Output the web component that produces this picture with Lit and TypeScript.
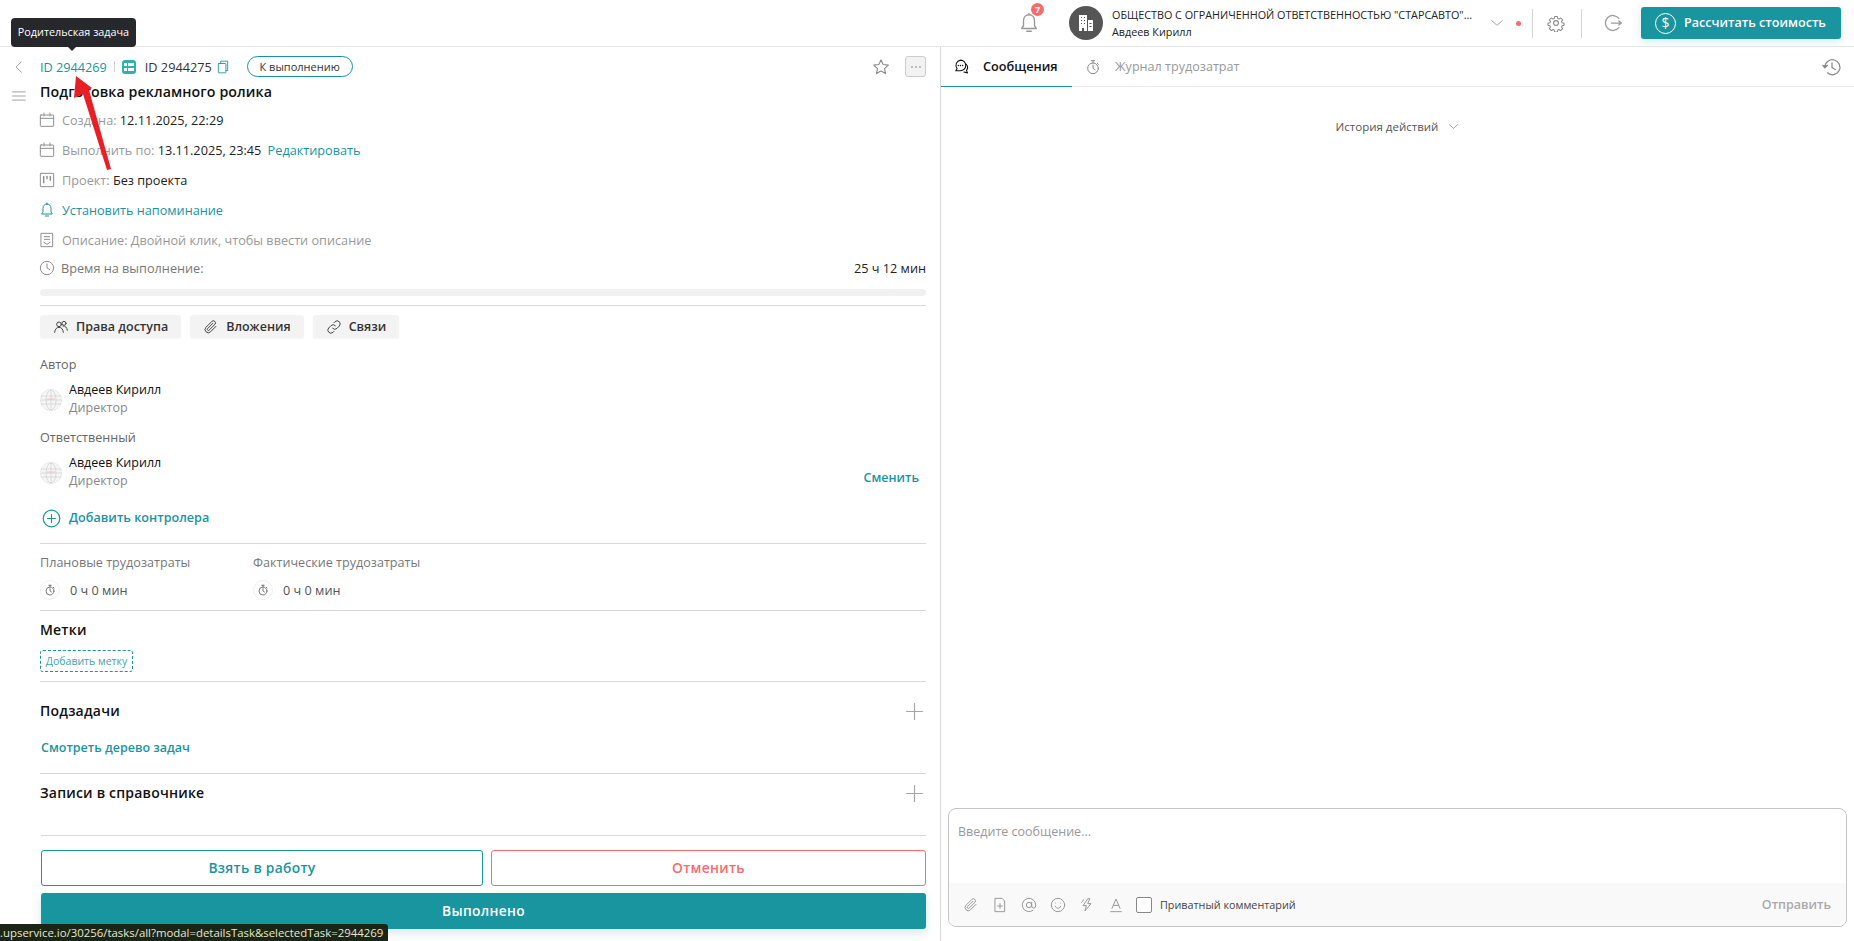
import { LitElement, html, css, svg } from "lit";
import { customElement } from "lit/decorators.js";

const ic = (size: number, body: unknown, cls = "") => html`<svg class="ic ${cls}" width=${size} height=${size} viewBox="0 0 24 24" fill="none" stroke="currentColor" stroke-width="1.5" stroke-linecap="round" stroke-linejoin="round">${body}</svg>`;

const calendar = svg`<rect x="2" y="4.500" width="20" height="17" rx="1"/><path d="M2 9.500h20M7.500 1.500V6M16.500 1.500V6"/>`;
const board = svg`<rect x="2" y="2" width="20" height="20" rx="1"/><path d="M7 6v11M12 6v5M17 6v7" stroke-width="2.200" stroke-linecap="butt"/>`;
const bell = svg`<path d="M12 3c-3.600 0-6 2.700-6 6.500V15l-2 3h16l-2-3V9.500C18 5.700 15.600 3 12 3z"/><path d="M9.500 21h5M12 1.500V3"/>`;
const doc = svg`<path d="M3.500 2h17v20h-17z"/><path d="M8 7h8M8 11h8M7.500 15.500l4.500 3 4.500-3"/>`;
const clock = svg`<circle cx="12" cy="12" r="10"/><path d="M12 6v6l4 2.500"/>`;
const people = svg`<circle cx="9" cy="8" r="3.500"/><circle cx="16.500" cy="6.500" r="3"/><path d="M2.500 20c.5-5 3-7.500 6.500-7.500s6 2.500 6.500 7.500M15 10.500c3.500-.5 6 2 6.500 6.500"/>`;
const clip = svg`<path d="M19.500 11l-8.200 8.200a4.800 4.800 0 0 1-6.800-6.800l9-9a3.200 3.200 0 0 1 4.500 4.500l-8.800 8.800a1.600 1.600 0 0 1-2.300-2.300l8-8"/>`;
const link = svg`<path d="M10 14a4.500 4.500 0 0 0 6.500 0l3.500-3.500a4.600 4.600 0 0 0-6.500-6.500l-1.500 1.500"/><path d="M14 10a4.500 4.500 0 0 0-6.500 0L4 13.500a4.600 4.600 0 0 0 6.500 6.500l1.500-1.500"/>`;
const timer = svg`<circle cx="12" cy="14" r="8"/><path d="M12 9v5l3 2M9.500 2.500h5M12 2.500V6M18.500 6.500l1.500 1.500"/>`;
const gear = svg`<circle cx="12" cy="12" r="3.200"/><path d="M10 2.500h4l.6 2.900 1.900.8 2.500-1.600 2.800 2.800-1.600 2.500.8 1.900 2.900.6v3l-2.900.6-.8 1.900 1.600 2.500-2.800 2.800-2.500-1.600-1.900.8-.6 2.900h-4l-.6-2.900-1.900-.8-2.500 1.600-2.800-2.800 1.600-2.500-.8-1.900-2.900-.6v-3l2.900-.6.8-1.900-1.600-2.500 2.800-2.800 2.500 1.600 1.900-.8z" transform="translate(1.200 1.200) scale(.9)"/>`;
const chat = svg`<path d="M10.500 3a7.500 7.500 0 0 1 0 15H4l1.700-3A7.500 7.500 0 0 1 10.500 3z"/><path d="M18.500 8.500a7 7 0 0 1 .5 9l1.500 3.500-5-1.200"/><path d="M7.500 10.500h.01M10.500 10.500h.01M13.500 10.500h.01" stroke-width="2"/>`;
const history = svg`<path d="M3.500 12A9 9 0 1 1 6.500 19"/><path d="M12 7v5.500l4 2.500"/><path d="M1 10l2.500 3L6.500 10" fill="currentColor"/>`;

const avatar = html`<svg class="avatar" width="22" height="22" viewBox="0 0 22 22" fill="none" stroke="#cfcfcf" stroke-width=".7">
  <circle cx="11" cy="11" r="10.500" fill="#f6f6f6" stroke="#d6d6d6" stroke-dasharray="2 .8"/>
  <ellipse cx="11" cy="11" rx="5" ry="10"/><path d="M1 7h20M1 11h20M1 15h20M11 1v20"/><path d="M7 10h8" stroke="#e8b4b4"/>
</svg>`;

@customElement("app-root")
export class AppRoot extends LitElement {
  static styles = css`
    :host { display: block; position: relative; width: 1854px; height: 941px; overflow: hidden; background: #fff; color: #111; font-family: "Open Sans", "Noto Sans", sans-serif; font-size: 12.700px; line-height: 18px; }
    * { box-sizing: border-box; }
    .ic { display: block; flex: none; }

    .top { display: flex; align-items: center; height: 47px; border-bottom: 1px solid #e8e8e8; padding-right: 13px; }
    .spacer { flex: 1; }
    .bell { position: relative; color: #999; width: 22px; height: 22px; margin-right: 29px; }
    .bell b { position: absolute; left: 13px; top: -9px; width: 13px; height: 13px; border-radius: 50%; background: #f56c6c; color: #fff; font-size: 9px; line-height: 13px; text-align: center; font-weight: 700; }
    .org-ava { width: 34px; height: 34px; border-radius: 50%; background: #555; display: flex; align-items: center; justify-content: center; margin-right: 9px; }
    .org { width: 378px; font-size: 10.800px; color: #222; }
    .org div { line-height: 17px; white-space: nowrap; }
    .chev { color: #999; }
    .dot { width: 5px; height: 5px; border-radius: 50%; background: #f56c6c; margin: 0 11px 0 12px; }
    .vsep { width: 1px; height: 29px; background: #d4d4d4; }
    .gear { color: #8a8a8a; margin: 0 16px 0 14px; }
    .logout { color: #999; margin: 0 18px 0 21px; }
    .calc { width: 200px; height: 32px; border-radius: 3px; background: #18959e; color: #fff; display: flex; align-items: center; padding-left: 14px; gap: 8px; font-weight: 600; font-size: 12.600px; box-shadow: 0 3px 8px rgba(24,149,158,.18); }
    .calc i { width: 21px; height: 21px; border: 1.500px solid #fff; border-radius: 50%; font-style: normal; text-align: center; line-height: 18px; font-size: 14px; font-weight: 400; }

    .body { display: flex; height: 894px; }
    .left { width: 941px; border-right: 1px solid #d6d6d6; display: flex; flex: none; }
    .rail { width: 40px; flex: none; padding: 5px 0 0 12px; color: #999; }
    .rail .cell { height: 30px; width: 18px; display: flex; align-items: center; }
    .rail .cell + .cell { margin-top: -1px; }
    .main { width: 886px; padding-top: 9px; }

    .head { display: flex; align-items: center; height: 21px; color: #333; }
    .teal { color: #18959e; }
    .sep { width: 1px; height: 11px; background: #ccc; margin: 0 7px; }
    .task-ic { width: 14px; height: 14px; border-radius: 3px; background: #2eb2b0; margin-right: 9px; display: grid; grid-template-columns: 3px 6px; gap: 2px 1px; padding: 3px 2px; }
    .task-ic span { background: #fff; height: 3px; }
    .copy { color: #18959e; margin-left: 4px; }
    .status { margin-left: 17px; width: 106px; height: 21px; border: 1px solid #1b8fa5; border-radius: 11px; text-align: center; font-size: 11px; line-height: 20px; color: #333; }
    .star { color: #8a8a8a; margin-right: 15px; }
    .more { width: 21px; height: 21px; border: 1px solid #ccc; border-radius: 3px; background: #f2f2f2; color: #999; display: flex; align-items: center; justify-content: center; gap: 2px; }
    .more span { width: 2px; height: 2px; background: #aaa; border-radius: 50%; }

    .title { height: 26px; margin-top: 2px; line-height: 26px; font-size: 14.200px; font-weight: 600; letter-spacing: .1px; }
    .row { display: flex; align-items: center; height: 30px; gap: 6px; color: #999; }
    .row.last { height: 26px; }
    .row svg { color: #8f8f8f; margin: 0 1px 0 -1px; }
    .row .v { color: #222; }
    .row .l { margin-left: 3px; }
    .row.t, .row.t svg { color: #18959e; }
    .row.time { color: #777; gap: 5px; }
    .row.time .v { margin-left: auto; }
    .progress { height: 7px; margin-top: 8px; border-radius: 4px; background: #f1f1f1; }
    .hr { height: 1px; background: #d9d9d9; }
    .m9 { margin-top: 9px; }

    .tabs { display: flex; gap: 9px; margin-top: 9px; }
    .tab { height: 23px; background: #f3f3f3; border-radius: 3px; display: flex; align-items: center; padding: 0 13px 0 13px; gap: 7px; font-weight: 600; font-size: 12.500px; color: #333; box-shadow: 0 1px 2px rgba(0,0,0,.04); }
    .tab svg { color: #444; }

    .label { height: 21px; line-height: 21px; color: #666; font-size: 12.600px; }
    .mt16 { margin-top: 16px; }
    .mt10 { margin-top: 10px; }
    .person { display: flex; align-items: center; gap: 7px; height: 37px; margin-top: 5px; position: relative; font-size: 12.500px; }
    .person .role { color: #888; }
    .person .avatar { margin-top: 3px; }
    .change { margin-left: auto; margin-right: 7px; margin-top: 13px; color: #18959e; font-weight: 600; }
    .add-ctrl { display: flex; align-items: center; gap: 8px; height: 20px; margin: 18px 0 15px 2px; color: #18959e; font-weight: 600; font-size: 12.600px; }

    .costs { display: flex; height: 66px; padding-top: 8px; }
    .cost { width: 213px; }
    .cost .label { color: #777; }
    .cost .val { display: flex; align-items: center; gap: 10px; margin-top: 7px; color: #555; font-size: 12.700px; }
    .ring { width: 20px; height: 20px; border-radius: 50%; border: 1px solid #f0f0f0; display: flex; align-items: center; justify-content: center; color: #555; }

    .h3 { font-size: 14px; font-weight: 600; line-height: 20px; letter-spacing: .2px; }
    .mt9 { margin-top: 9px; }
    .mt19 { margin-top: 19px; }
    .chip { width: 93px; height: 22px; margin-top: 10px; border: 1px dashed #18959e; border-radius: 3px; color: #3aa6ae; font-size: 10.500px; line-height: 20px; text-align: center; }
    .sec-head { display: flex; align-items: center; justify-content: space-between; padding-right: 2px; height: 20px; }
    .plus { color: #a5a5a5; }
    .tree { margin: 18px 0 0 1px; height: 34px; color: #18959e; font-weight: 600; font-size: 12.500px; }
    .last-hr { margin: 32px 0 0 1px; }

    .actions { display: flex; gap: 8px; margin: 14px 0 0 1px; }
    .btn { height: 36px; border-radius: 3px; font-size: 13.800px; line-height: 34px; text-align: center; font-weight: 600; letter-spacing: .3px; }
    .btn.a { width: 442px; border: 1px solid #18959e; color: #18959e; }
    .btn.b { flex: 1; border: 1px solid #f56c6c; color: #f56c6c; }
    .btn.c { margin: 7px 0 0 1px; background: #18959e; color: #fff; border-radius: 3px; box-shadow: 0 4px 10px rgba(24,149,158,.2); line-height: 36px; }

    .right { flex: 1; display: flex; flex-direction: column; padding-bottom: 14px; }
    .rtabs { display: flex; align-items: center; height: 40px; border-bottom: 1px solid #ececec; position: relative; flex: none; }
    .rt { height: 40px; display: flex; align-items: center; }
    .rt.on { width: 131px; padding-left: 12px; gap: 13px; font-weight: 600; border-bottom: 1.500px solid #18959e; color: #111; }
    .rt.off { padding-left: 13px; gap: 14px; color: #999; font-size: 12.600px; }
    .rt.off svg { color: #888; }
    .hist { margin-left: auto; margin-right: 12px; color: #888; }
    .feed { flex: 1; padding-top: 31px; display: flex; justify-content: center; align-items: flex-start; gap: 10px; font-size: 11.500px; color: #555; }
    .feed svg { color: #777; margin-top: 3px; }
    .composer { margin: 0 7px 0 7px; height: 119px; border: 1px solid #c4c4c4; border-radius: 8px; display: flex; flex-direction: column; overflow: hidden; flex: none; }
    .msg { flex: 1; padding: 14px 9px; color: #999; font-size: 12.500px; }
    .foot { height: 43px; background: #f9f9f9; display: flex; align-items: center; padding: 0 15px 0 14px; color: #999; flex: none; }
    .foot .tool { width: 29px; display: flex; }
    .box { width: 16px; height: 16px; border: 1px solid #888; border-radius: 2px; background: #fff; margin: 0 8px 0 -1px; }
    .priv { font-size: 10.800px; color: #444; }
    .send { margin-left: auto; color: #aaa; font-weight: 600; font-size: 12.500px; }

    .tip { position: absolute; left: 11px; top: 18px; width: 125px; height: 29px; background: #26282b; border-radius: 4px; color: #fff; font-size: 10.800px; line-height: 27px; text-align: center; }
    .tip::after { content: ""; position: absolute; left: 57px; top: 29px; border: 4px solid transparent; border-top-color: #26282b; border-bottom: 0; }
    .arrow { position: absolute; left: 60px; top: 60px; pointer-events: none; }
    .url { position: absolute; left: 0; bottom: 0; width: 388px; height: 17px; background: #1a2417; border-radius: 0 3px 0 0; color: #e8e8d0; font-size: 11.400px; line-height: 17px; white-space: nowrap; overflow: hidden; }
  `;

  render() {
    return html`
      <div class="top">
        <div class="spacer"></div>
        <div class="bell">${ic(22, bell)}<b>7</b></div>
        <div class="org-ava">
          <svg width="18" height="18" viewBox="0 0 18 18" fill="#fff"><path d="M2 1h8v16H7v-3H5v3H2zM11 6h5v11h-5z"/><path d="M4 3h1v1H4zM7 3h1v1H7zM4 6h1v1H4zM7 6h1v1H7zM4 9h1v1H4zM7 9h1v1H7zM12.500 9h2v1h-2zM12.500 12h2v1h-2z" fill="#555"/></svg>
        </div>
        <div class="org"><div>ОБЩЕСТВО С ОГРАНИЧЕННОЙ ОТВЕТСТВЕННОСТЬЮ "СТАРСАВТО"...</div><div>Авдеев Кирилл</div></div>
        <span class="chev">${ic(14, svg`<path d="M3 8l9 8 9-8"/>`)}</span>
        <div class="dot"></div>
        <div class="vsep"></div>
        <span class="gear">${ic(18, gear)}</span>
        <div class="vsep"></div>
        <span class="logout">${ic(20, svg`<path d="M19 6.500A9 9 0 1 0 19 17.500"/><path d="M10 12h12M19 9.500l3 2.500-3 2.500"/>`)}</span>
        <div class="calc"><i>$</i>Рассчитать стоимость</div>
      </div>

      <div class="body">
        <div class="left">
          <div class="rail">
            <div class="cell">${ic(14, svg`<path d="M16 3l-9 9 9 9"/>`)}</div>
            <div class="cell">${ic(14, svg`<path d="M1 5h22M1 12h22M1 19h22"/>`)}</div>
          </div>
          <div class="main">
            <div class="head">
              <span class="teal">ID 2944269</span><span class="sep"></span>
              <span class="task-ic"><span></span><span></span><span></span><span></span></span>
              <span>ID 2944275</span>
              <span class="copy">${ic(14, svg`<rect x="4" y="6" width="13" height="16" rx="1"/><path d="M8 6V2h12v16h-3"/>`)}</span>
              <span class="status">К выполнению</span>
              <span class="spacer"></span>
              <span class="star">${ic(18, svg`<path d="M12 2.500l2.900 6.200 6.800.8-5 4.600 1.300 6.700-6-3.400-6 3.400 1.300-6.700-5-4.600 6.800-.8z"/>`)}</span>
              <span class="more"><span></span><span></span><span></span></span>
            </div>
            <div class="title">Подготовка рекламного ролика</div>
            <div class="row">${ic(16, calendar)}<span>Создана: <span class="v">12.11.2025, 22:29</span></span></div>
            <div class="row">${ic(16, calendar)}<span>Выполнить по: <span class="v">13.11.2025, 23:45</span><span class="teal l"> Редактировать</span></span></div>
            <div class="row">${ic(16, board)}<span>Проект: <span class="v">Без проекта</span></span></div>
            <div class="row t">${ic(16, bell)}<span>Установить напоминание</span></div>
            <div class="row">${ic(16, doc)}<span>Описание: Двойной клик, чтобы ввести описание</span></div>
            <div class="row last time">${ic(16, clock)}<span>Время на выполнение:</span><span class="v">25 ч 12 мин</span></div>
            <div class="progress"></div>
            <div class="hr m9"></div>
            <div class="tabs">
              <div class="tab">${ic(16, people)}Права доступа</div>
              <div class="tab">${ic(16, clip)}Вложения</div>
              <div class="tab">${ic(16, link)}Связи</div>
            </div>
            <div class="label mt16">Автор</div>
            <div class="person">${avatar}<div><div>Авдеев Кирилл</div><div class="role">Директор</div></div></div>
            <div class="label mt10">Ответственный</div>
            <div class="person">${avatar}<div><div>Авдеев Кирилл</div><div class="role">Директор</div></div><span class="change">Сменить</span></div>
            <div class="add-ctrl">${ic(19, svg`<circle cx="12" cy="12" r="10.500"/><path d="M12 7v10M7 12h10"/>`)}Добавить контролера</div>
            <div class="hr"></div>
            <div class="costs">
              <div class="cost"><div class="label">Плановые трудозатраты</div><div class="val"><span class="ring">${ic(12, timer)}</span>0 ч 0 мин</div></div>
              <div class="cost"><div class="label">Фактические трудозатраты</div><div class="val"><span class="ring">${ic(12, timer)}</span>0 ч 0 мин</div></div>
            </div>
            <div class="hr"></div>
            <div class="h3 mt9">Метки</div>
            <div class="chip">Добавить метку</div>
            <div class="hr m9"></div>
            <div class="sec-head mt19 h3"><span>Подзадачи</span><span class="plus">${ic(19, svg`<path d="M12 2v20M2 12h20"/>`)}</span></div>
            <div class="tree">Смотреть дерево задач</div>
            <div class="hr"></div>
            <div class="sec-head mt9 h3"><span>Записи в справочнике</span><span class="plus">${ic(19, svg`<path d="M12 2v20M2 12h20"/>`)}</span></div>
            <div class="hr last-hr"></div>
            <div class="actions"><div class="btn a">Взять в работу</div><div class="btn b">Отменить</div></div>
            <div class="btn c">Выполнено</div>
          </div>
        </div>

        <div class="right">
          <div class="rtabs">
            <div class="rt on">${ic(17, chat)}<span>Сообщения</span></div>
            <div class="rt off">${ic(16, timer)}<span>Журнал трудозатрат</span></div>
            <span class="hist">${ic(20, history)}</span>
          </div>
          <div class="feed"><span>История действий</span>${ic(11, svg`<path d="M3 8l9 8 9-8"/>`)}</div>
          <div class="composer">
            <div class="msg">Введите сообщение...</div>
            <div class="foot">
              <span class="tool">${ic(16, clip)}</span>
              <span class="tool">${ic(16, svg`<path d="M5 2h10l4 4v16H5z"/><path d="M12 10v7M8.500 13.500h7"/>`)}</span>
              <span class="tool">${ic(16, svg`<circle cx="12" cy="12" r="4"/><path d="M16 8v5.500a3 3 0 0 0 6 0V12a10 10 0 1 0-4 8"/>`)}</span>
              <span class="tool">${ic(16, svg`<circle cx="12" cy="12" r="10"/><path d="M8 14c1 2 2.500 3 4 3s3-1 4-3M8.500 9h.01M15.500 9h.01"/>`)}</span>
              <span class="tool">${ic(16, svg`<path d="M13 3L6 13h5l-2 8 9-11h-5l3-7zM7 4L4 8"/>`)}</span>
              <span class="tool">${ic(16, svg`<path d="M6 17l6-14 6 14M8 12.500h8M4 22h16"/>`)}</span>
              <span class="box"></span>
              <span class="priv">Приватный комментарий</span>
              <span class="send">Отправить</span>
            </div>
          </div>
        </div>
      </div>

      <div class="tip">Родительская задача</div>
      <svg class="arrow" width="60" height="120" viewBox="0 0 60 120" fill="#e81f25">
        <path d="M16 16L14 38 23 34 47 110 51 109 29 30 32 28z"/>
      </svg>
      <div class="url">.upservice.io/30256/tasks/all?modal=detailsTask&selectedTask=2944269</div>
    `;
  }
}
